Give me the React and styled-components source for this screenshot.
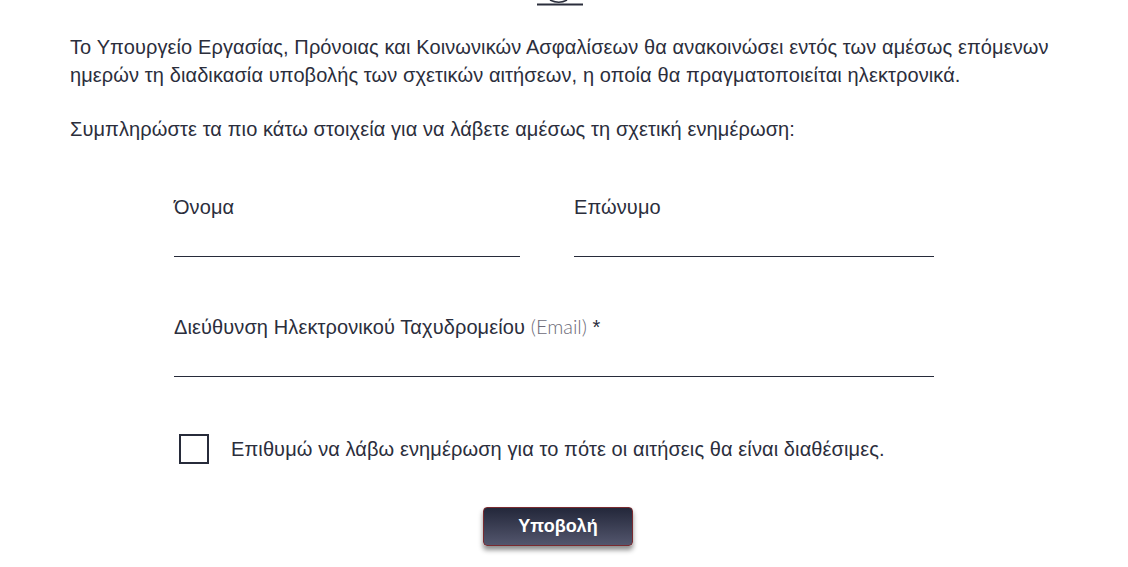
import React, { useState } from "react";
import styled, { createGlobalStyle } from "styled-components";

// --------------------------
// -- Global Styles --
// --------------------------
const GlobalStyle = createGlobalStyle`
  html, body {
    margin: 0;
    padding: 0;
    background: #ffffff;
  }
  body {
    font-family: "Liberation Sans", Arial, sans-serif;
    color: #2b2e3c;
  }
`;

// --------------------------
// -- Styled Subcomponents --
// --------------------------
const Page = styled.main`
  width: 1128px;
  height: 567px;
  overflow: hidden;
  box-sizing: border-box;
  padding: 0 66px 0 70px;
`;

const Ornament = styled.div`
  display: flex;
  justify-content: center;
  height: 6px;
  padding-right: 13px;

  > svg {
    display: block;
  }
`;

const Paragraph = styled.p`
  margin: ${(props) => props.$top || "0"} 0 0;
  font-size: 20px;
  letter-spacing: 0.1px;
  line-height: 28px;
  color: #2b2e3c;
`;

const Form = styled.form`
  margin: 52px 0 0 104px;
  width: 760px;
`;

const FieldRow = styled.div`
  display: grid;
  grid-template-columns: ${(props) => props.$columns || "1fr"};
  column-gap: 54px;
  margin-top: ${(props) => props.$top || "0"};
`;

const Field = styled.div`
  display: flex;
  flex-direction: column;
`;

const Label = styled.label`
  font-size: 20px;
  letter-spacing: 0.1px;
  line-height: 24px;
  color: #2b2e3c;
`;

const LabelHint = styled.span`
  font-family: Lato, "Liberation Sans", sans-serif;
  font-weight: 300;
  font-size: 20px;
  letter-spacing: 0;
  color: #6d6b78;
`;

const TextInput = styled.input`
  box-sizing: border-box;
  height: 38px;
  border: none;
  border-bottom: 1px solid #272b3a;
  outline: none;
  background: transparent;
  font-family: inherit;
  font-size: 18px;
  color: #2b2e3c;
  padding: 0;
`;

const CheckRow = styled.label`
  display: flex;
  align-items: center;
  gap: 22px;
  margin: 57px 0 0 5px;
  font-size: 20px;
  letter-spacing: 0.1px;
  line-height: 24px;
  cursor: pointer;
`;

const Box = styled.span`
  box-sizing: border-box;
  width: 30px;
  height: 30px;
  border: 2px solid #272b3a;
  background: #fff;
  display: flex;
  align-items: center;
  justify-content: center;
  font-size: 18px;
`;

const HiddenCheck = styled.input`
  display: none;
`;

const Actions = styled.div`
  display: flex;
  justify-content: center;
  margin: 43px 0 0 0;
  padding-left: 8px;
`;

const SubmitButton = styled.button`
  width: 150px;
  height: 39px;
  border: 1px solid #7a2b30;
  border-radius: 4px;
  background: linear-gradient(to bottom, #23273a 0%, #53566d 100%);
  box-shadow: 0 4px 5px rgba(0, 0, 0, 0.45);
  color: #ffffff;
  font-family: "Liberation Sans", Arial, sans-serif;
  font-weight: 700;
  font-size: 18px;
  cursor: pointer;
`;

// --------------------
// -- Main Component --
// --------------------
function App() {
  const [wantsUpdates, setWantsUpdates] = useState(false);

  return (
    <>
      <GlobalStyle />
      <Page>
        <Ornament>
          <svg width="46" height="6" viewBox="0 0 46 6">
            <path
              d="M13 0 Q22 4.5 30 0"
              fill="none"
              stroke="#2b2e3c"
              strokeWidth="1.6"
            />
            <rect x="0" y="3.5" width="46" height="2" fill="#2b2e3c" />
          </svg>
        </Ornament>

        <Paragraph $top="27px">
          Το Υπουργείο Εργασίας, Πρόνοιας και Κοινωνικών Ασφαλίσεων θα
          ανακοινώσει εντός των αμέσως επόμενων ημερών τη διαδικασία υποβολής
          των σχετικών αιτήσεων, η οποία θα πραγματοποιείται ηλεκτρονικά.
        </Paragraph>
        <Paragraph $top="26px">
          Συμπληρώστε τα πιο κάτω στοιχεία για να λάβετε αμέσως τη σχετική
          ενημέρωση:
        </Paragraph>

        <Form onSubmit={(e) => e.preventDefault()}>
          <FieldRow $columns="346px 360px">
            <Field>
              <Label htmlFor="first-name">Όνομα</Label>
              <TextInput id="first-name" type="text" />
            </Field>
            <Field>
              <Label htmlFor="last-name">Επώνυμο</Label>
              <TextInput id="last-name" type="text" />
            </Field>
          </FieldRow>

          <FieldRow $top="57px">
            <Field>
              <Label htmlFor="email">
                Διεύθυνση Ηλεκτρονικού Ταχυδρομείου <LabelHint>(Email)</LabelHint> *
              </Label>
              <TextInput id="email" type="email" />
            </Field>
          </FieldRow>

          <CheckRow>
            <HiddenCheck
              type="checkbox"
              checked={wantsUpdates}
              onChange={(e) => setWantsUpdates(e.target.checked)}
            />
            <Box>{wantsUpdates ? "✓" : ""}</Box>
            Επιθυμώ να λάβω ενημέρωση για το πότε οι αιτήσεις θα είναι διαθέσιμες.
          </CheckRow>

          <Actions>
            <SubmitButton type="submit">Υποβολή</SubmitButton>
          </Actions>
        </Form>
      </Page>
    </>
  );
}

export default App;
